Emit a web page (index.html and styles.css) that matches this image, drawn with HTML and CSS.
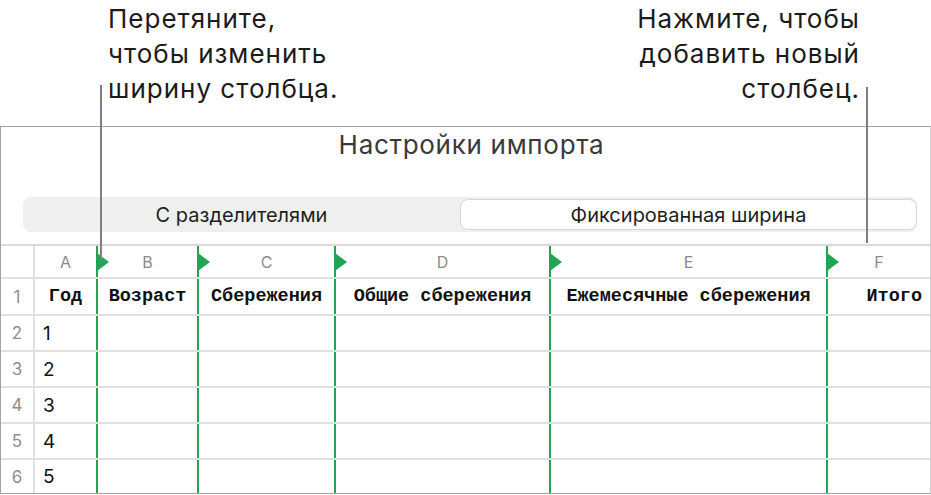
FILE: index.html
```html
<!DOCTYPE html>
<html lang="ru">
<head>
    <meta charset="UTF-8">
    <meta name="viewport" content="width=device-width, initial-scale=1.0">
    <title>Настройки импорта</title>
    <link rel="stylesheet" href="styles.css">
</head>
<body>
    <div class="callouts">
        <p class="callout callout-left">Перетяните,<br>чтобы изменить<br>ширину столбца.</p>
        <p class="callout callout-right">Нажмите, чтобы<br>добавить новый<br>столбец.</p>
    </div>

    <div class="panel">
        <h1 class="panel-title">Настройки импорта</h1>

        <div class="segmented">
            <div class="segment">С разделителями</div>
            <div class="segment active">Фиксированная ширина</div>
        </div>

        <div class="sheet">
            <div class="row head">
                <div class="cell num"></div>
                <div class="cell">A</div>
                <div class="cell split">B</div>
                <div class="cell split">C</div>
                <div class="cell split">D</div>
                <div class="cell split">E</div>
                <div class="cell split">F</div>
            </div>
            <div class="row titles">
                <div class="cell num">1</div>
                <div class="cell">Год</div>
                <div class="cell split">Возраст</div>
                <div class="cell split">Сбережения</div>
                <div class="cell split">Общие сбережения</div>
                <div class="cell split">Ежемесячные сбережения</div>
                <div class="cell split last">Итого</div>
            </div>
            <div class="row">
                <div class="cell num">2</div>
                <div class="cell value">1</div>
                <div class="cell split"></div>
                <div class="cell split"></div>
                <div class="cell split"></div>
                <div class="cell split"></div>
                <div class="cell split"></div>
            </div>
            <div class="row">
                <div class="cell num">3</div>
                <div class="cell value">2</div>
                <div class="cell split"></div>
                <div class="cell split"></div>
                <div class="cell split"></div>
                <div class="cell split"></div>
                <div class="cell split"></div>
            </div>
            <div class="row">
                <div class="cell num">4</div>
                <div class="cell value">3</div>
                <div class="cell split"></div>
                <div class="cell split"></div>
                <div class="cell split"></div>
                <div class="cell split"></div>
                <div class="cell split"></div>
            </div>
            <div class="row">
                <div class="cell num">5</div>
                <div class="cell value">4</div>
                <div class="cell split"></div>
                <div class="cell split"></div>
                <div class="cell split"></div>
                <div class="cell split"></div>
                <div class="cell split"></div>
            </div>
            <div class="row">
                <div class="cell num">6</div>
                <div class="cell value">5</div>
                <div class="cell split"></div>
                <div class="cell split"></div>
                <div class="cell split"></div>
                <div class="cell split"></div>
                <div class="cell split"></div>
            </div>
        </div>
    </div>

    <!-- линии-выноски поверх таблицы -->
    <span class="leader leader-left"></span>
    <span class="leader leader-right"></span>
</body>
</html>
```

FILE: styles.css
```css
* {
    box-sizing: border-box;
}

body {
    margin: 0;
    width: 931px;
    height: 495px;
    overflow: hidden;
    position: relative;
    background: #fff;
    color: #111;
    font-family: Inter, "Noto Sans", sans-serif;
}

.callouts {
    height: 126px;
    display: flex;
    justify-content: space-between;
}

.callout {
    margin: 0;
    padding-top: 1px;
    font-size: 26px;
    line-height: 35px;
    letter-spacing: 1px;
    color: #1b1b1b;
}

.callout-left {
    margin-left: 108px;
}

.callout-right {
    margin-right: 71px;
    text-align: right;
}

.leader {
    position: absolute;
    width: 2px;
    background: #7f7f7f;
    z-index: 2;
}

.leader-left {
    left: 100px;
    top: 85px;
    height: 175px;
}

.leader-right {
    left: 866px;
    top: 87px;
    height: 156px;
}

.panel {
    height: 368px;
    border: 1px solid #a3a3a3;
    border-right-color: #d0d0d0;
}

.panel-title {
    margin: 0;
    padding: 3px 0 0 12px;
    font-size: 26px;
    line-height: 30px;
    letter-spacing: 0.7px;
    font-weight: 400;
    color: #3a3a3a;
    text-align: center;
}

.segmented {
    display: flex;
    height: 35px;
    margin: 37px 13px 0 22px;
    padding: 2px 0;
    background: #efefef;
    border-radius: 8px;
    font-size: 20px;
    color: #1e1e1e;
}

.segment {
    flex: 0 0 437px;
    display: flex;
    align-items: center;
    justify-content: center;
}

.segment.active {
    flex: 1;
    background: #fff;
    border: 1px solid #d6d6d6;
    border-radius: 8px;
}

.sheet {
    margin-top: 12px;
    border-top: 2px solid #dadada;
}

.row {
    display: grid;
    grid-template-columns: 34px 61px 101px 137px 215px 277px 1fr;
    height: 36px;
    border-bottom: 2px solid #e0e0e0;
}

.row.head {
    height: 33px;
}

.row.titles {
    height: 37px;
}

.row:last-child {
    height: 33px;
    border-bottom: none;
}

.cell {
    position: relative;
    display: flex;
    align-items: center;
    justify-content: center;
    white-space: pre;
}

.cell.num {
    border-right: 2px solid #e0e0e0;
    color: #8e8e8e;
    font-size: 17px;
}

.cell.split {
    border-left: 2px solid #22a454;
}

.head .cell {
    color: #8b8b8b;
    font-size: 16px;
}

/* маркер изменения ширины */
.head .split::before {
    content: "";
    position: absolute;
    left: -1px;
    top: 50%;
    margin-top: -9px;
    border-left: 12px solid #22a454;
    border-top: 9px solid transparent;
    border-bottom: 9px solid transparent;
}

.titles .cell {
    font-family: "Liberation Mono", "DejaVu Sans Mono", monospace;
    font-weight: 700;
    font-size: 18.5px;
    color: #111;
}

.titles .cell.num {
    font-family: Inter, "Noto Sans", sans-serif;
    font-weight: 400;
    font-size: 17px;
    color: #8e8e8e;
}

.titles .cell.last {
    justify-content: flex-end;
    padding-right: 8px;
}

.cell.value {
    justify-content: flex-start;
    padding-left: 8px;
    font-size: 19px;
}
```
